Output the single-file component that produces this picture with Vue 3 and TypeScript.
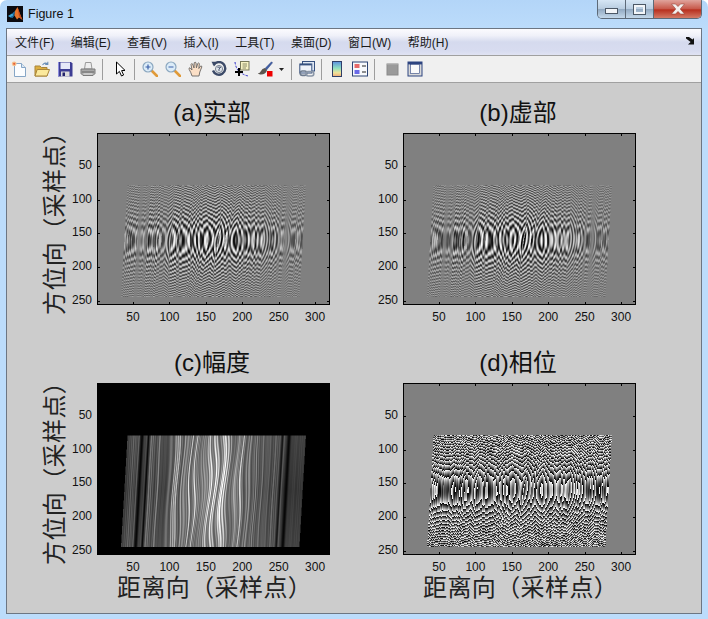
<template>
  <div class="window">
    <!-- title bar -->
    <div class="titlebar">
      <svg class="app-logo" viewBox="0 0 16 16" width="16" height="16">
        <rect width="16" height="16" fill="#0b0b10" />
        <path d="M1 10 L5 7.5 L7 9 L3.5 11.5 Z" fill="#3fa6d8" />
        <path d="M5 7.5 L8 5 L7.5 9.5 L5.5 12 L3.5 11.5 L7 9 Z" fill="#1d6fa8" />
        <path d="M8 5 L10.5 1 L13 8 L15.5 14 L12 11.5 L10 13.5 L7.5 9.5 Z" fill="#e8742a" />
        <path d="M10.5 1 L13 8 L15.5 14 L12 10 Z" fill="#c5471c" />
      </svg>
      <span class="title-text">Figure 1</span>
      <div class="win-controls">
        <div class="win-btn min"><span class="min-glyph"></span></div>
        <div class="win-btn max"><span class="max-glyph"></span></div>
        <div class="win-btn close">
          <svg viewBox="0 0 14 12" width="16" height="12">
            <path d="M0.5 1 H4.5 L7 3.6 L9.5 1 H13.5 L9.2 6 L13.5 11 H9.5 L7 8.4 L4.5 11 H0.5 L4.8 6 Z" fill="#f4f0ee" stroke="#8a3a2e" stroke-width="0.5" />
          </svg>
        </div>
      </div>
    </div>

    <div class="client">
      <!-- menu -->
      <div class="menubar">
        <span v-for="m in menus" :key="m" class="menu-item">{{ m }}</span>
        <svg class="dock-arrow" viewBox="0 0 9 8" width="9" height="8">
          <path d="M0 0 H3 L6.5 2.6 L8 1 V7.5 H2 L4.6 5 L0 1.5 Z" fill="#111" />
        </svg>
      </div>

      <!-- toolbar -->
      <div class="toolbar">
        <div class="tool">
          <svg viewBox="0 0 16 16" width="16" height="16">
            <path d="M3.5 2.5 H10.5 L14.5 6.5 V15.5 H3.5 Z" fill="#fbfdff" stroke="#86a6c6" />
            <path d="M10.5 2.5 V6.5 H14.5" fill="#dbe8f4" stroke="#86a6c6" />
            <circle cx="3.2" cy="2.8" r="2.4" fill="#f6c08a" />
            <circle cx="3.2" cy="2.8" r="1.1" fill="#e8603a" />
          </svg>
        </div>
        <div class="tool">
          <svg viewBox="0 0 16 16" width="16" height="16">
            <path d="M1 5 H6 L7.5 6.5 H13 V15 H1 Z" fill="#dcae40" stroke="#a8853a" />
            <path d="M1 15 L3.2 8.5 H15.5 L13 15 Z" fill="#fbe99c" stroke="#a8853a" />
            <path d="M8.5 4 Q11 0.8 13.5 3 M13.8 0.8 V3.4 H11.2" fill="none" stroke="#6a8fb8" stroke-width="1.1" />
          </svg>
        </div>
        <div class="tool">
          <svg viewBox="0 0 16 16" width="16" height="16">
            <path d="M1 1 H14 L15.5 2.5 V15.5 H1 Z" fill="#3d3d94" />
            <rect x="3.5" y="1.5" width="9.5" height="6.5" fill="#e6e8f8" />
            <rect x="4" y="10.5" width="8.5" height="5" fill="#dcdcdc" />
            <rect x="5.5" y="11.5" width="2.5" height="3.5" fill="#24246c" />
            <path d="M1.5 1 V15.5" stroke="#8c8cdc" />
          </svg>
        </div>
        <div class="tool">
          <svg viewBox="0 0 16 16" width="16" height="16">
            <path d="M4.5 8 L5.5 1.5 H11 L12 8 Z" fill="#eeeeee" stroke="#9a9a9a" />
            <path d="M1 8 H15 V12.5 L13 14.5 H3 L1 12.5 Z" fill="#a8a8a8" stroke="#7a7a7a" />
            <path d="M2 11 H14" stroke="#666" />
            <path d="M3.5 13 H12.5" stroke="#d4d4d4" stroke-width="1.4" />
          </svg>
        </div>
        <div class="sep"></div>
        <div class="tool arrow-tool">
          <svg viewBox="0 0 16 16" width="16" height="16">
            <path d="M4.5 1 V13 L7.4 10.4 L9.5 15 L11.6 14 L9.6 9.6 L13 9.4 Z" fill="#fff" stroke="#000" stroke-width="1" stroke-linejoin="miter" />
          </svg>
        </div>
        <div class="sep"></div>
        <div class="tool">
          <svg viewBox="0 0 16 16" width="16" height="16">
            <path d="M9.5 9.5 L15 15" stroke="#e09a38" stroke-width="2.6" stroke-linecap="round" />
            <circle cx="6" cy="6" r="5" fill="#dcecf8" stroke="#8ca8c0" stroke-width="1.2" />
            <path d="M3.5 6 H8.5 M6 3.5 V8.5" stroke="#3a5fa8" stroke-width="1.2" />
          </svg>
        </div>
        <div class="tool">
          <svg viewBox="0 0 16 16" width="16" height="16">
            <path d="M9.5 9.5 L15 15" stroke="#e09a38" stroke-width="2.6" stroke-linecap="round" />
            <circle cx="6" cy="6" r="5" fill="#dcecf8" stroke="#8ca8c0" stroke-width="1.2" />
            <path d="M3.5 6 H8.5" stroke="#3a5fa8" stroke-width="1.2" />
          </svg>
        </div>
        <div class="tool">
          <svg viewBox="0 0 16 16" width="16" height="16">
            <path d="M4 15 Q3 11.5 1.2 8.5 Q0.4 6.8 2 6.8 L4 9 L3 3.5 Q3.4 2 4.6 3 L6 7 L6.2 1.8 Q7.2 0.6 8 1.8 L8.4 6.8 L9.8 2.4 Q10.8 1.4 11.4 2.6 L10.8 7.5 L12.6 5 Q14 4.6 13.8 6 L11.8 11 L11 15 Z" fill="#fbdfc6" stroke="#6a6664" stroke-width="0.9" />
          </svg>
        </div>
        <div class="tool">
          <svg viewBox="0 0 16 16" width="16" height="16">
            <path d="M2.6 4 A6.3 6.3 0 1 1 2 9.5" fill="none" stroke="#3c4a68" stroke-width="2.4" />
            <path d="M0.5 0.8 H6 L3 5.6 Z" fill="#3c4a68" />
            <circle cx="8" cy="8" r="3.6" fill="#dfe4ea" stroke="#7d8796" />
            <path d="M6.4 6.2 H9.8 L8 8 V10" fill="none" stroke="#3c4a68" stroke-width="0.9" />
          </svg>
        </div>
        <div class="tool">
          <svg viewBox="0 0 16 16" width="16" height="16">
            <path d="M1 1 Q2 9 7 12 T15 15" fill="none" stroke="#2a2ac8" stroke-width="1" stroke-dasharray="2.2 1.4" />
            <rect x="6.5" y="0.5" width="8.5" height="8.5" fill="#f7f2c4" stroke="#77775a" />
            <path d="M8.5 3 H13 M8.5 5 H13 M8.5 7 H12" stroke="#8a8a68" />
            <path d="M5 7 V15 M1 11 H9" stroke="#000" stroke-width="2" />
          </svg>
        </div>
        <div class="tool brush-tool">
          <svg viewBox="0 0 16 16" width="16" height="16">
            <path d="M8 7.5 L14.5 0.8 L15.5 1.8 L9.5 9 Z" fill="#3f5fa8" stroke="#2a3f78" stroke-width="0.5" />
            <path d="M8 7 L10 9.4 Q8.5 13.2 4 13.4 Q1.6 13.6 0.8 12.6 Q3 12.4 4 10 Q5 7.6 8 7 Z" fill="#5b5650" />
            <rect x="10" y="10" width="5.5" height="5.5" fill="#ee0000" />
          </svg>
        </div>
        <svg class="drop-arrow" viewBox="0 0 5 3" width="5" height="3"><path d="M0 0 H5 L2.5 3 Z" fill="#222" /></svg>
        <div class="sep"></div>
        <div class="tool">
          <svg viewBox="0 0 16 16" width="16" height="16">
            <rect x="3.5" y="0.5" width="12" height="9.5" fill="#dde6f2" stroke="#36507e" />
            <rect x="0.8" y="3" width="12" height="9" fill="#eef2f8" stroke="#36507e" />
            <path d="M1 3.6 H12.5" stroke="#36507e" stroke-width="1.6" />
            <rect x="1.2" y="10" width="6.6" height="4.4" rx="2.2" fill="none" stroke="#6d7b8f" stroke-width="1.6" />
            <rect x="7" y="10.6" width="7.8" height="4.4" rx="2.2" fill="none" stroke="#8b97a8" stroke-width="1.6" />
          </svg>
        </div>
        <div class="sep"></div>
        <div class="tool">
          <svg viewBox="0 0 16 16" width="16" height="16">
            <defs>
              <linearGradient id="cbar" x1="0" y1="0" x2="0" y2="1">
                <stop offset="0" stop-color="#5a8fe0" />
                <stop offset="0.45" stop-color="#8fe0c0" />
                <stop offset="0.75" stop-color="#f0e49a" />
                <stop offset="1" stop-color="#f0a878" />
              </linearGradient>
            </defs>
            <rect x="3.5" y="0.5" width="9" height="15" fill="url(#cbar)" stroke="#2f3f68" />
          </svg>
        </div>
        <div class="tool">
          <svg viewBox="0 0 16 16" width="16" height="16">
            <rect x="0.5" y="1" width="15" height="14" fill="#f7f9fc" stroke="#2c4475" />
            <rect x="2.5" y="3" width="5" height="4" fill="#e86a6a" />
            <rect x="2.5" y="9" width="5" height="4" fill="#6a6ae8" />
            <path d="M10 5 H14 M10 11 H14" stroke="#222" />
          </svg>
        </div>
        <div class="sep last-sep"></div>
        <div class="tool">
          <svg viewBox="0 0 16 16" width="16" height="16">
            <rect x="3" y="3" width="11" height="11" fill="#9a9a9a" stroke="#8a8a8a" />
            <path d="M3 3 H14" stroke="#b8b8b8" />
          </svg>
        </div>
        <div class="tool">
          <svg viewBox="0 0 16 16" width="16" height="16">
            <rect x="1" y="1" width="14" height="14" fill="#d9d9d9" stroke="#2d4480" />
            <rect x="1" y="1" width="14" height="2.4" fill="#2d4480" />
            <rect x="3.5" y="3.4" width="9" height="9" fill="#fafafa" stroke="#2d4480" stroke-width="0.6" />
          </svg>
        </div>
      </div>

      <!-- figure -->
      <div class="figure">
        <section v-for="(p, i) in plots" :key="p.title" class="subplot" :class="{ 'bottom-row': i > 1 }">
          <div class="plot-title">{{ p.title }}</div>
          <div v-if="i % 2 === 0" class="ylabel">方位向（采样点）</div>
          <div class="axes">
            <canvas :ref="(el) => setCanvas(i, el)" width="233" height="172"></canvas>
            <template v-for="t in xTicks" :key="t">
              <i class="tick tx top" :style="{ left: xPos(t) + 'px' }"></i>
              <i class="tick tx bot" :style="{ left: xPos(t) + 'px' }"></i>
              <span class="xnum" :style="{ left: xPos(t) + 'px' }">{{ t }}</span>
            </template>
            <template v-for="t in yTicks" :key="t">
              <i class="tick ty lft" :style="{ top: yPos(t) + 'px' }"></i>
              <i class="tick ty rgt" :style="{ top: yPos(t) + 'px' }"></i>
              <span class="ynum" :style="{ top: yPos(t) + 'px' }">{{ t }}</span>
            </template>
          </div>
          <div v-if="i > 1" class="xlabel">距离向（采样点）</div>
        </section>
      </div>
    </div>
  </div>
</template>

<script setup lang="ts">
import { onMounted } from 'vue';

const menus = ['文件(F)', '编辑(E)', '查看(V)', '插入(I)', '工具(T)', '桌面(D)', '窗口(W)', '帮助(H)'];
const plots = [{ title: '(a)实部' }, { title: '(b)虚部' }, { title: '(c)幅度' }, { title: '(d)相位' }];
const xTicks = [50, 100, 150, 200, 250, 300];
const yTicks = [50, 100, 150, 200, 250];

const AXES_W = 233;
const AXES_H = 172;
const xPos = (t: number) => ((t - 0.5) / 320) * AXES_W;
const yPos = (t: number) => ((t - 0.5) / 256) * AXES_H;

const canvases: HTMLCanvasElement[] = [];
const setCanvas = (i: number, el: unknown) => {
  if (el) canvases[i] = el as HTMLCanvasElement;
};

// range profile: a handful of scatterers, each one a complex tone [freq, phase]
const tones = [
  [0.57, 0.4], [-0.83, 1.9], [1.07, 3.1], [-1.31, 5.0], [0.71, 2.2], [-1.53, 0.9], [0.97, 4.2], [-0.43, 2.7], [1.27, 1.3],
];
const profile = (v: number) => {
  let re = 0;
  let im = 0;
  for (const [w, p] of tones) {
    re += Math.cos(w * v + p);
    im += Math.sin(w * v + p);
  }
  return { abs: Math.hypot(re, im) / 5, arg: Math.atan2(im, re) };
};

const bell = (d: number, w: number) => Math.exp(-(d * d) / (w * w));

// echo sample at range x, azimuth r; null outside the illuminated patch
const sample = (x: number, r: number) => {
  if (r < 78 || r > 244) return null;
  const u = x - (42 - ((r - 78) * 9) / 166);
  if (u < 0 || u > 245) return null;
  const dr = r - 160;
  const du = u - 122;
  const centre = bell(du, 72);
  const v = u + 2.6 * Math.sin(r * 0.045 + u * 0.09) * bell(du, 55);
  const z = profile(v);
  const a = Math.min(1, z.abs);
  let mag = 0.18 + 0.05 * Math.abs(dr) / 80
    + centre * (0.1 + 0.72 * Math.pow(a, 2) * (0.72 + 0.28 * bell(dr, 60)) + 0.1 * bell(du, 45) * bell(dr, 70));
  mag += (1 - centre) * 0.14 * Math.pow(a, 1.5) * bell(u, 170);
  mag *= 1 - 0.92 * bell(u - 20, 2.6);
  mag *= 1 - 0.9 * bell(u - 29, 1.5);
  mag *= 1 - 0.92 * bell(u - 222, 2.6);
  mag *= 1 - 0.75 * bell(u - 213, 1.4);
  // azimuth chirp on top of the range phase, with a weak barrel term
  const phase = 0.012 * dr * dr + 0.0036 * du * du + z.arg;
  return { mag: Math.min(1, mag), phase, dr };
};

const grey = (x: number, r: number, kind: number) => {
  const s = sample(x, r);
  if (!s) return kind === 2 ? 0 : 128;
  const amp = Math.min(1, s.mag * 1.8) * (0.55 + 0.45 * bell(s.dr, 36));
  if (kind === 0) return 128 + 127 * amp * Math.cos(s.phase);
  if (kind === 1) return 128 + 127 * amp * Math.sin(s.phase);
  if (kind === 2) return 255 * s.mag;
  return 128 + 127 * (Math.atan2(Math.sin(s.phase), Math.cos(s.phase)) / Math.PI);
};

const drawPlot = (cv: HTMLCanvasElement, kind: number) => {
  const ctx = cv.getContext('2d');
  if (!ctx) return;
  const img = ctx.createImageData(AXES_W, AXES_H);
  // the phase plot stays nearest sampled, the others are averaged down a little
  const ss = kind === 3 ? 1 : 2;
  for (let py = 0; py < AXES_H; py++) {
    for (let px = 0; px < AXES_W; px++) {
      let g = 0;
      for (let a = 0; a < ss; a++) {
        for (let b = 0; b < ss; b++) {
          g += grey(((px + (a + 0.5) / ss) / AXES_W) * 320, ((py + (b + 0.5) / ss) / AXES_H) * 256, kind);
        }
      }
      g /= ss * ss;
      const o = (py * AXES_W + px) * 4;
      img.data[o] = img.data[o + 1] = img.data[o + 2] = g;
      img.data[o + 3] = 255;
    }
  }
  ctx.putImageData(img, 0, 0);
};

onMounted(() => {
  canvases.forEach((cv, i) => drawPlot(cv, i));
});
</script>

<style scoped>
.window {
  width: 708px;
  height: 619px;
  box-sizing: border-box;
  padding: 0 6px 5px;
  background: linear-gradient(180deg, #b3d5f8 0%, #bcdcfb 30px, #bcdcfb 100%);
  border-radius: 7px 7px 0 0;
  font-family: "Liberation Sans", "Noto Sans CJK SC", sans-serif;
  color: #000;
  overflow: hidden;
  display: flex;
  flex-direction: column;
}

.titlebar {
  height: 28px;
  flex: none;
  display: flex;
  align-items: flex-start;
  position: relative;
}

.app-logo {
  margin: 6px 0 0 1px;
}

.title-text {
  margin: 6px 0 0 5px;
  font-size: 12.5px;
  line-height: 16px;
  color: #111;
}

.win-controls {
  margin-left: auto;
  margin-right: 0;
  display: flex;
  height: 18px;
  border: 1px solid #5d6a78;
  border-top: 0;
  border-radius: 0 0 5px 5px;
  overflow: hidden;
}

.win-btn {
  display: flex;
  align-items: center;
  justify-content: center;
}

.win-btn.min,
.win-btn.max {
  width: 27px;
  background: linear-gradient(180deg, #d6e6f5 0%, #b9cde0 48%, #93aac2 52%, #c4d8ea 100%);
  border-right: 1px solid #5d6a78;
}

.win-btn.close {
  width: 47px;
  background: linear-gradient(180deg, #e0a49c 0%, #c85a4c 48%, #b8301f 55%, #d47a66 100%);
}

.min-glyph {
  width: 11px;
  height: 4px;
  margin-top: 4px;
  border: 1px solid #4c5866;
  background: #f2f5f8;
}

.max-glyph {
  width: 7px;
  height: 5px;
  border: 2px solid #f2f5f8;
  outline: 1px solid #4c5866;
}

.client {
  flex: 1;
  display: flex;
  flex-direction: column;
  border: 1px solid #6d7682;
  background: #f0f0f0;
  min-height: 0;
}

.menubar {
  height: 27px;
  box-sizing: border-box;
  flex: none;
  display: flex;
  align-items: center;
  gap: 16.4px;
  padding: 0 0 2px 8px;
  font-size: 12px;
  color: #1a1a1a;
  background: linear-gradient(180deg, #fbfbfe 0%, #f0f1f9 25%, #d5daee 50%, #d8dcf0 85%, #e0e3f3 100%);
  border-bottom: 1px solid #a0a0a0;
}

.dock-arrow {
  margin-left: auto;
  margin-right: 6px;
}

.toolbar {
  height: 27px;
  box-sizing: border-box;
  flex: none;
  display: flex;
  align-items: center;
  background: #f0f0f0;
  border-bottom: 1px solid #a0a0a0;
}

.tool {
  width: 23px;
  height: 22px;
  display: flex;
  align-items: center;
  justify-content: center;
}

.arrow-tool {
  margin-left: 2px;
}

.sep {
  width: 1px;
  height: 21px;
  margin: 0 3px;
  background: #9d9d9d;
}

.last-sep {
  margin-right: 5px;
}

.drop-arrow {
  margin: 0 4px 0 3px;
}

.figure {
  flex: 1;
  background: #cccccc;
  display: grid;
  grid-template-columns: 306px 306px;
  grid-auto-rows: min-content;
  align-content: start;
  padding-top: 19px;
  min-height: 0;
}

.subplot {
  display: grid;
  grid-template-columns: 90px 233px;
  grid-template-rows: 31px 172px auto;
  margin-bottom: 47px;
}

.subplot.bottom-row {
  margin-bottom: 0;
}

.plot-title {
  grid-column: 2;
  grid-row: 1;
  text-align: center;
  padding-right: 3px;
  font-size: 24px;
  line-height: 22px;
  white-space: nowrap;
  color: #111;
}

.ylabel {
  grid-column: 1;
  grid-row: 2;
  justify-self: start;
  align-self: start;
  margin: -14px 0 0 36px;
  height: 196px;
  font-size: 24px;
  line-height: 24px;
  letter-spacing: 0.4px;
  white-space: nowrap;
  writing-mode: vertical-rl;
  text-orientation: sideways;
  transform: rotate(180deg);
  color: #222;
}

.axes {
  grid-column: 2;
  grid-row: 2;
  position: relative;
  width: 233px;
  height: 172px;
}

.axes canvas {
  display: block;
  width: 233px;
  height: 172px;
}

.axes::after {
  content: "";
  position: absolute;
  inset: 0;
  border: 1px solid #000;
}

.tick {
  position: absolute;
  background: #000;
  z-index: 1;
}

.tx {
  width: 1px;
  height: 3px;
}

.tx.top {
  top: 0;
}

.tx.bot {
  bottom: 0;
}

.ty {
  width: 3px;
  height: 1px;
}

.ty.lft {
  left: 0;
}

.ty.rgt {
  right: 0;
}

.xnum,
.ynum {
  position: absolute;
  font-size: 12px;
  line-height: 14px;
  color: #111;
}

.xnum {
  top: 177px;
  transform: translateX(-50%);
}

.ynum {
  right: 238px;
  transform: translateY(-50%);
  margin-top: -1px;
}

.xlabel {
  grid-column: 2;
  grid-row: 3;
  margin: 20px 0 0 20px;
  font-size: 24px;
  line-height: 26px;
  letter-spacing: 0.4px;
  white-space: nowrap;
  color: #222;
}
</style>

<style>
html,
body {
  margin: 0;
  background: #ffffff;
}
</style>
